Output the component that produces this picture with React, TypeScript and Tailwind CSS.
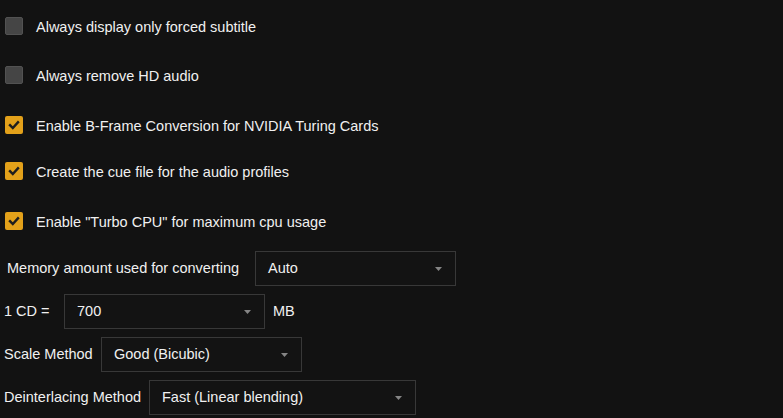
import React from "react";

function Box({ checked }: { checked: boolean }) {
  if (checked) {
    return (
      <div className="w-[18px] h-[18px] rounded-[2px] bg-[#e3a11a] flex items-center justify-center shrink-0">
        <svg width="18" height="18" viewBox="0 0 18 18">
          <path d="M5 9.2 L7.8 12 L13 6.3" fill="none" stroke="#1e1e1e" strokeWidth="2.4" strokeLinecap="square" strokeLinejoin="miter" />
        </svg>
      </div>
    );
  }
  return <div className="w-[18px] h-[18px] rounded-[2px] bg-[#454545] border border-[#525252] shrink-0" />;
}

function CheckRow({ checked, label, cls }: { checked: boolean; label: string; cls: string }) {
  return (
    <div className={"flex items-center h-[18px] pl-[5px] gap-[13px] " + cls}>
      <Box checked={checked} />
      <span className="leading-[18px] translate-y-[0.5px]">{label}</span>
    </div>
  );
}

function Select({ value, w }: { value: string; w: string }) {
  return (
    <div className={"h-[35px] border border-[#383838] bg-[#131313] flex items-center justify-between pl-[12px] pr-[13px] shrink-0 " + w}>
      <span>{value}</span>
      <svg width="7" height="4" viewBox="0 0 7 4">
        <path d="M0 0 H7 L3.5 4 Z" fill="#858585" />
      </svg>
    </div>
  );
}

export default function App() {
  return (
    <div
      className="w-[783px] h-[418px] bg-[#121212] text-[#f0f0f0] text-[14.5px] overflow-hidden"
      style={{ fontFamily: '"Liberation Sans", Arial, sans-serif' }}
    >
      <div className="flex flex-col pt-[17px]">
        <CheckRow checked={false} label="Always display only forced subtitle" cls="" />
        <CheckRow checked={false} label="Always remove HD audio" cls="mt-[31px]" />
        <CheckRow checked={true} label="Enable B-Frame Conversion for NVIDIA Turing Cards" cls="mt-[32px]" />
        <CheckRow checked={true} label="Create the cue file for the audio profiles" cls="mt-[28px]" />
        <CheckRow checked={true} label={'Enable "Turbo CPU" for maximum cpu usage'} cls="mt-[32px]" />
      </div>
      <div className="flex flex-col gap-[8px] mt-[21px] pl-[4px]">
        <div className="flex items-center">
          <span className="w-[248px] ml-[3px]">Memory amount used for converting</span>
          <Select value="Auto" w="w-[201px]" />
        </div>
        <div className="flex items-center">
          <span className="w-[60px]">1 CD =</span>
          <Select value="700" w="w-[201px]" />
          <span className="ml-[8px]">MB</span>
        </div>
        <div className="flex items-center">
          <span className="w-[97px]">Scale Method</span>
          <Select value="Good (Bicubic)" w="w-[201px]" />
        </div>
        <div className="flex items-center">
          <span className="w-[145px]">Deinterlacing Method</span>
          <Select value="Fast (Linear blending)" w="w-[267px]" />
        </div>
      </div>
    </div>
  );
}
